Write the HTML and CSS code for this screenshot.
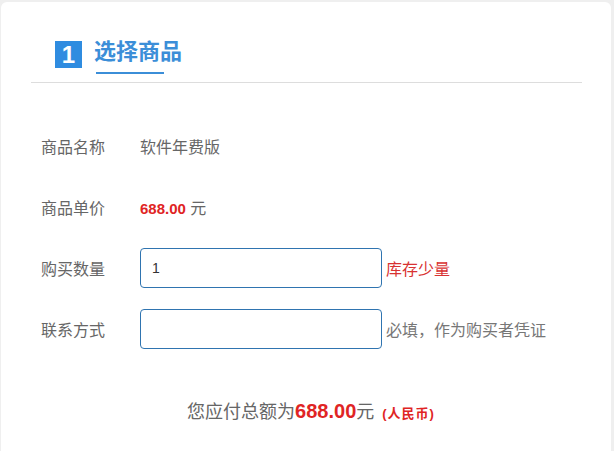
FILE: index.html
```html
<!DOCTYPE html>
<html lang="zh-CN">
<head>
<meta charset="utf-8">
<title>选择商品</title>
<link rel="stylesheet" href="styles.css">
</head>
<body>
<div class="card">
  <div class="head">
    <div class="brand">
      <span class="step">1</span>
      <div class="title-col">
        <span class="title">选择商品</span>
        <span class="title-bar"></span>
      </div>
    </div>
  </div>
  <div class="form">
    <div class="row">
      <span class="label">商品名称</span>
      <span class="value">软件年费版</span>
    </div>
    <div class="row">
      <span class="label">商品单价</span>
      <span class="value"><b class="price">688.00</b> 元</span>
    </div>
    <div class="row">
      <span class="label">购买数量</span>
      <input class="field" type="text" value="1">
      <span class="hint hint-red">库存少量</span>
    </div>
    <div class="row">
      <span class="label">联系方式</span>
      <input class="field" type="text" value="">
      <span class="hint">必填，作为购买者凭证</span>
    </div>
  </div>
  <div class="total">
    <span class="total-text">您应付总额为</span><b class="total-num">688.00</b><span class="total-text">元</span><b class="total-cur">(人民币)</b>
  </div>
</div>
</body>
</html>
```
FILE: styles.css
```css
html, body {
  margin: 0;
  padding: 0;
  background: #efefef;
}
body {
  font-family: "Liberation Sans", "Noto Sans CJK SC", sans-serif;
  height: 451px;
  overflow: hidden;
}
.card {
  margin: 2px 3px 0 1px;
  width: 610px;
  height: 449px;
  background: #fff;
  border-radius: 6px 6px 0 0;
  box-sizing: border-box;
}
.head {
  margin: 0 29px 0 30px;
  padding: 36px 0 8px 24px;
  border-bottom: 1px solid #dddddd;
}
.brand {
  display: flex;
  align-items: flex-start;
  gap: 12px;
}
.step {
  margin-top: 3px;
  width: 27px;
  height: 27px;
  background: #2f8ce0;
  color: #fff;
  font-weight: bold;
  font-size: 24px;
  line-height: 28px;
  text-align: center;
}
.title-col {
  display: flex;
  flex-direction: column;
}
.title {
  font-family: "Noto Sans CJK SC", sans-serif;
  font-weight: bold;
  font-size: 22px;
  line-height: 22px;
  color: #3b8ed8;
}
.title-bar {
  margin: 12px 0 0 2px;
  width: 68px;
  height: 2px;
  background: #3b8ed8;
}
.form {
  padding: 43px 0 0 40px;
  display: flex;
  flex-direction: column;
  gap: 21px;
}
.row {
  display: flex;
  align-items: center;
  height: 40px;
}
.label {
  width: 99px;
  font-size: 16px;
  color: #666;
  font-family: "Noto Sans CJK SC", sans-serif;
}
.value {
  font-size: 16px;
  color: #666;
}
.price {
  color: #e02424;
  font-size: 15px;
}
.field {
  box-sizing: border-box;
  width: 242px;
  height: 40px;
  margin: 0;
  border: 1px solid #2f74b0;
  border-radius: 4px;
  padding: 0 11px;
  font-family: "Liberation Sans", sans-serif;
  font-size: 14px;
  color: #333;
  outline: none;
}
.hint {
  margin-left: 4px;
  font-size: 16px;
  color: #777;
}
.hint-red {
  color: #d83232;
}
.total {
  margin-top: 50px;
  padding-left: 10px;
  text-align: center;
  line-height: 24px;
}
.total-text {
  font-size: 18px;
  color: #666;
}
.total-num {
  font-size: 20px;
  color: #e02424;
}
.total-cur {
  font-size: 13px;
  color: #e02424;
  margin-left: 8px;
  letter-spacing: 1px;
}
```
